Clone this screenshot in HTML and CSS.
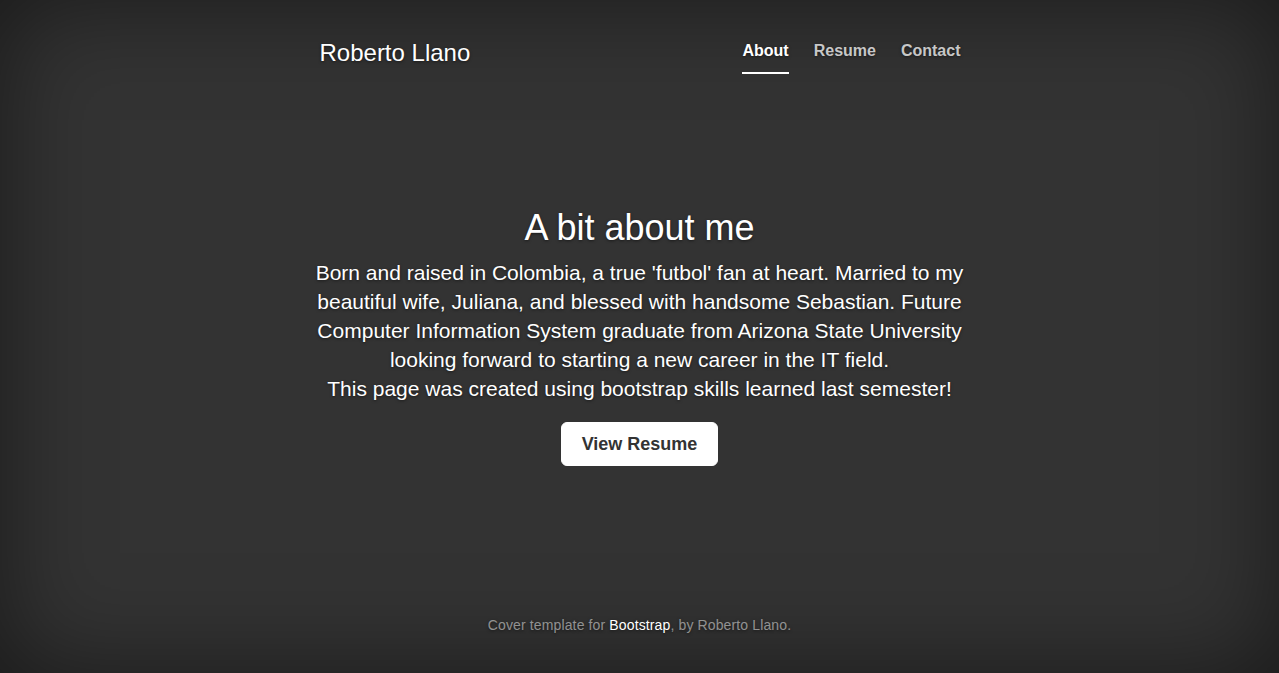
FILE: index.html
```html
<!DOCTYPE html>
<html lang="en">
<head>
<meta charset="utf-8">
<title>Roberto Llano</title>
<link rel="stylesheet" href="styles.css">
</head>
<body>
<div class="site">
  <header class="masthead">
    <h3 class="brand">Roberto Llano</h3>
    <nav class="nav">
      <a class="nav-link active" href="#">About</a>
      <a class="nav-link" href="#">Resume</a>
      <a class="nav-link" href="#">Contact</a>
    </nav>
  </header>
  <main class="cover">
    <h1 class="cover-heading">A bit about me</h1>
    <p class="lead">Born and raised in Colombia, a true 'futbol' fan at heart. Married to my beautiful wife, Juliana, and blessed with handsome Sebastian. Future Computer Information System graduate from Arizona State University looking forward to starting a new career in the IT field.<br>This page was created using bootstrap skills learned last semester!</p>
    <a class="btn" href="#">View Resume</a>
  </main>
  <footer class="mastfoot">
    <p>Cover template for <a href="#">Bootstrap</a>, by Roberto Llano.</p>
  </footer>
</div>
</body>
</html>
```
FILE: styles.css
```css
html, body {
  height: 100%;
  margin: 0;
  background-color: #333;
}
body {
  font-family: "Liberation Sans", Arial, sans-serif;
  font-size: 14px;
  line-height: 1.42857;
  color: #fff;
  text-align: center;
  text-shadow: 0 1px 3px rgba(0, 0, 0, .5);
}
a {
  color: #fff;
  text-decoration: none;
}
.site {
  height: 100%;
  display: grid;
  grid-template-columns: 1fr;
  grid-template-rows: 1fr;
  box-shadow: inset 0 0 100px rgba(0, 0, 0, .5);
}
.masthead, .cover, .mastfoot {
  grid-area: 1 / 1;
  width: 640px;
  justify-self: center;
}
.masthead {
  align-self: start;
  display: flex;
  justify-content: space-between;
  align-items: flex-start;
  padding-top: 30px;
}
.brand {
  margin: 10px 0;
  font-size: 24px;
  font-weight: 500;
  line-height: 1.1;
}
.nav {
  display: flex;
  gap: 25px;
  margin-top: 1px;
  margin-right: -1px;
}
.nav-link {
  display: block;
  padding: 10px 0 11px;
  font-size: 16px;
  font-weight: bold;
  line-height: 20px;
  color: rgba(255, 255, 255, .75);
  border-bottom: 2px solid transparent;
}
.nav-link.active {
  color: #fff;
  border-bottom-color: #fff;
}
.cover {
  align-self: center;
  width: 700px;
  display: flex;
  flex-direction: column;
  align-items: center;
  padding-top: 1px;
}
.cover-heading {
  margin: 0 0 10px;
  font-size: 36px;
  font-weight: 500;
  line-height: 1.1;
}
.lead {
  margin: 0 0 19.5px;
  font-size: 21px;
  line-height: 29px;
  width: 680px;
}
.btn {
  display: block;
  padding: 10px 20px;
  font-size: 18px;
  line-height: 22px;
  font-weight: bold;
  color: #333;
  text-shadow: none;
  background-color: #fff;
  border: 1px solid #fff;
  border-radius: 6px;
}
.mastfoot {
  align-self: end;
  color: rgba(255, 255, 255, .5);
  padding-bottom: 38.5px;
}
.mastfoot p {
  margin: 0;
  line-height: 20px;
  letter-spacing: 0.13px;
}
```
